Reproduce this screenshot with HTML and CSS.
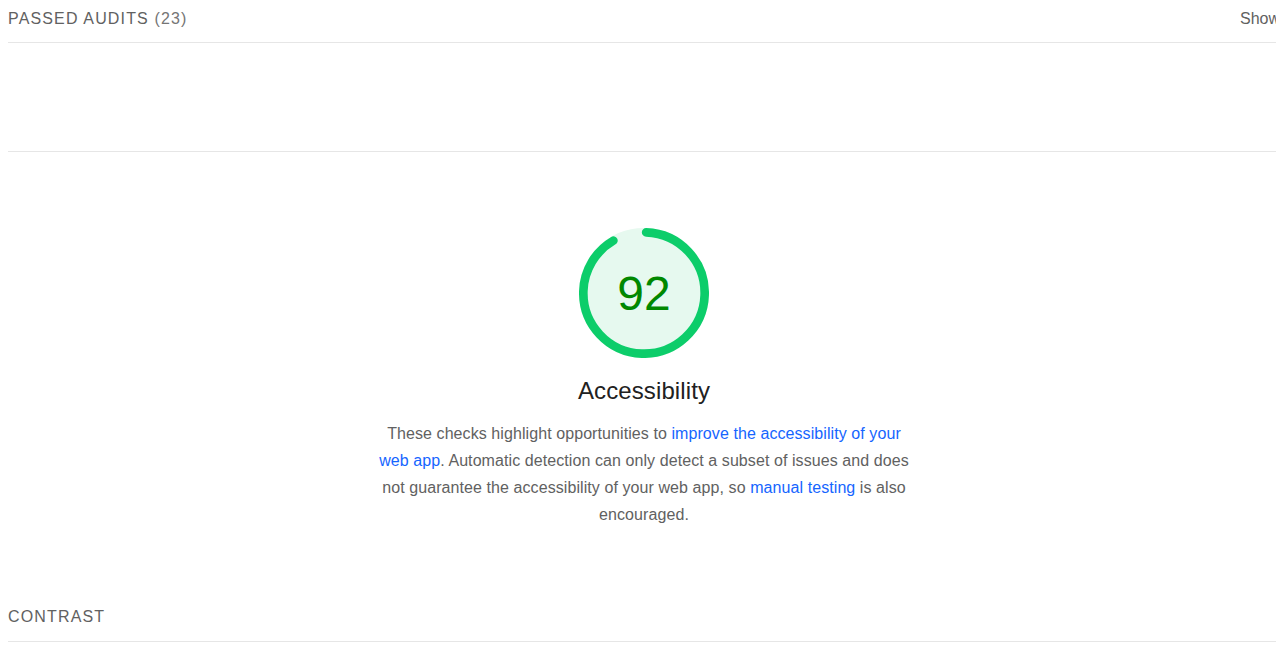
FILE: index.html
```html
<!DOCTYPE html>
<html lang="en">
<head>
<meta charset="utf-8">
<title>Lighthouse Report</title>
<link rel="stylesheet" href="styles.css">
</head>
<body>
<div class="page">
  <div class="group-header">
    <span class="group-title">Passed audits <span class="group-count">(23)</span></span>
    <span class="group-toggle">Show</span>
  </div>
  <div class="divider"></div>

  <div class="category-header">
    <svg class="gauge" width="130" height="130" viewBox="0 0 120 120" aria-hidden="true">
      <circle class="gauge-base" cx="60" cy="60" r="56"></circle>
      <circle class="gauge-arc" cx="60" cy="60" r="56" transform="rotate(-87.95 60 60)" stroke-dasharray="319.7 351.86"></circle>
      <text class="gauge-score" x="60" y="60" text-anchor="middle" dominant-baseline="central">92</text>
    </svg>
    <div class="category-title">Accessibility</div>
    <p class="category-desc">These checks highlight opportunities to <a href="#">improve the accessibility of your web app</a>. Automatic detection can only detect a subset of issues and does not guarantee the accessibility of your web app, so <a href="#">manual testing</a> is also encouraged.</p>
  </div>

  <div class="group-header contrast">
    <span class="group-title">Contrast</span>
  </div>
</div>
</body>
</html>
```

FILE: styles.css
```css
html {
  overflow: hidden;
}

body {
  margin: 0;
  background: #ffffff;
  font-family: "Liberation Sans", Arial, sans-serif;
  color: #616161;
}

.page {
  width: 1272px;
  padding: 0 8px;
}

.group-header {
  display: flex;
  justify-content: space-between;
  align-items: center;
  padding: 9px 0 13px;
  border-bottom: 1px solid #e6e6e6;
  font-size: 16px;
  line-height: 20px;
}

.group-title {
  text-transform: uppercase;
  letter-spacing: 1.15px;
  color: #616161;
}

.group-count {
  color: #757575;
}

.group-toggle {
  color: #616161;
}

.divider {
  margin-top: 108px;
  border-top: 1px solid #e6e6e6;
}

.category-header {
  display: flex;
  flex-direction: column;
  align-items: center;
  padding-top: 76px;
}

.gauge {
  display: block;
  width: 130px;
  height: 130px;
}

.gauge-base {
  fill: #e6f9ef;
  stroke: #e6f9ef;
  stroke-width: 8;
}

.gauge-arc {
  fill: none;
  stroke: #0ccd6a;
  stroke-width: 8;
  stroke-linecap: round;
}

.gauge-score {
  font-family: "Liberation Sans", Arial, sans-serif;
  font-size: 44.3px;
  fill: #008800;
}

.category-title {
  margin-top: 17px;
  font-size: 24px;
  line-height: 32px;
  letter-spacing: 0.1px;
  color: #212121;
}

.category-desc {
  width: 540px;
  margin: 13px 0 0;
  font-size: 16px;
  line-height: 27px;
  letter-spacing: 0.08px;
  text-align: center;
  color: #616161;
}

.category-desc a {
  color: #1565ff;
  text-decoration: none;
}

.contrast {
  margin-top: 70px;
  padding-bottom: 14px;
}
```
